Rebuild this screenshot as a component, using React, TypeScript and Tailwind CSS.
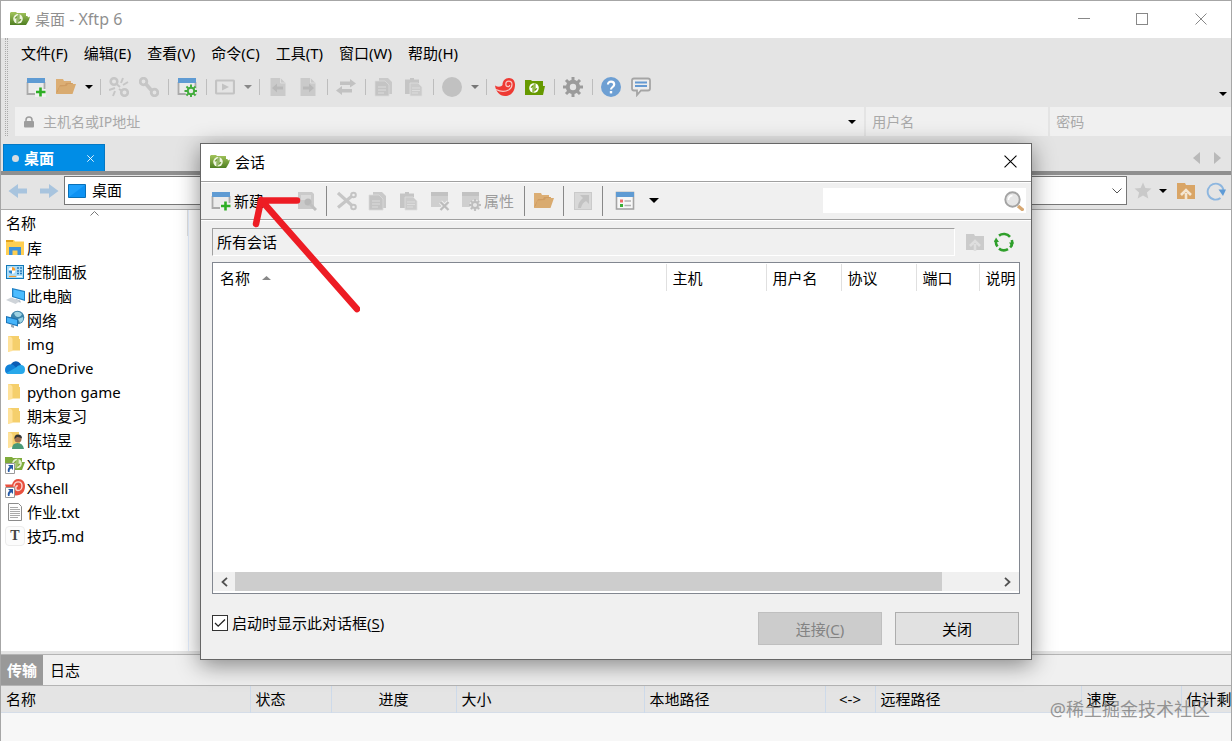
import React from "react";

type IconProps = { children: React.ReactNode; size?: string; box?: string };

function Icon({ children, size = "h-5 w-5", box = "0 0 20 20" }: IconProps) {
  return (
    <svg viewBox={box} className={`${size} block shrink-0`} fill="none" aria-hidden="true">
      {children}
    </svg>
  );
}

const Swirl = ({ x, y, disc, mark }: { x: number; y: number; disc: string; mark: string }) => (
  <g transform={`translate(${x} ${y})`}>
    <circle r="4.800" fill={disc} />
    <path d="M-.9 4.600V-2.400L-3-.4M.9-4.600V2.400L3 .4" stroke={mark} strokeWidth="1.200" />
  </g>
);

const XftpFolder = () => (
  <Icon>
    <defs>
      <linearGradient id="xftp-green" x1="0" y1="0" x2="0" y2="1">
        <stop offset="0" stopColor="#a3c55c" />
        <stop offset="1" stopColor="#4f7f22" />
      </linearGradient>
    </defs>
    <path d="M0 4 1 3h5l1 1h9v3h1.500l.5 1.500 2-1-1 3.500-2 3.500-1 1.500H0z" fill="url(#xftp-green)" />
    <Swirl x={8} y={9.800} disc="#eff5e0" mark="#6f9c35" />
  </Icon>
);

const XftpFlat = () => (
  <Icon>
    <path d="M0 3h6l1 1h11v5h2l-2 9H0z" fill="#669900" />
    <Swirl x={9} y={11} disc="#fff" mark="#669900" />
  </Icon>
);

const XshellFlat = () => (
  <Icon>
    <path d="M0 8.500c3 1.800 6.200 1.500 7.500-.5C7.500 4 10 1 14 1c3.500 0 6 2.800 6 6.500C20 14.500 16 19 10 19 4.500 19 1 14.500 0 8.500z" fill="#ee3a34" />
    <path d="M1 12.500c4.500 2.300 9.500 2.300 13 .200 2-1.300 3-3 3-5.200 0-2-1.300-3.400-3.200-3.400-1.800 0-3 1.300-3 3 0 1.600 1.100 2.600 2.300 2.600 1 0 1.600-.7 1.600-1.600" stroke="#f7c8c5" strokeWidth="1.200" />
  </Icon>
);

const WindowPlus = () => (
  <Icon>
    <path d="M1.500 5V17h17V5" stroke="#aaa" strokeWidth="1.800" fill="#ebebeb" />
    <path d="M1 1h18v5H1z" fill="#5f9bd3" />
    <path d="M9 12h11v8H9z" fill="#f0f0f0" />
    <path d="M14.500 10.500v9M10 15h9.500" stroke="#2eae25" strokeWidth="2.600" />
  </Icon>
);

const gearTeeth = "M10 0v4M10 16v4M0 10h4M16 10h4M3 3l3 3M14 14l3 3M17 3l-3 3M6 14l-3 3";

const WindowGear = () => (
  <Icon>
    <path d="M1.500 5V17h17V5" stroke="#aaa" strokeWidth="1.800" fill="#ebebeb" />
    <path d="M1 1h18v5H1z" fill="#5f9bd3" />
    <circle cx="14" cy="14" r="6" fill="#e8e8e8" />
    <g transform="translate(7.500 7.500) scale(.65)">
      <circle cx="10" cy="10" r="5" stroke="#42ac3c" strokeWidth="3" />
      <path d={gearTeeth} stroke="#42ac3c" strokeWidth="3" />
    </g>
  </Icon>
);

const Gear = () => (
  <Icon>
    <circle cx="10" cy="10" r="5.200" stroke="#9b9b9b" strokeWidth="4" />
    <path d={gearTeeth} stroke="#9b9b9b" strokeWidth="3" />
  </Icon>
);

const OpenFolder = () => (
  <Icon>
    <path d="M0 2h7l1 2h7v2h2v3L14 17H0z" fill="#dcae74" />
    <path d="M0 16 4 8h5l1-2h7" fill="#cf9c62" />
    <path d="m3.500 9.500 7-.5 1.500-2h8l-3.500 10H1z" fill="#d9ab70" />
  </Icon>
);

const Unlink = () => (
  <Icon>
    <g stroke="#c6c6c6" strokeWidth="2.600">
      <circle cx="5" cy="4.500" r="3.300" />
      <circle cx="15.500" cy="15.500" r="3.300" />
      <path d="m12 6 2-5M14 8l5-3M6 14l-2 5M6 11l-6 2M7.500 7l3.500 3M10 12l3 2" strokeWidth="2" />
    </g>
  </Icon>
);

const Link = () => (
  <Icon>
    <g stroke="#c6c6c6" strokeWidth="2.800">
      <circle cx="4.500" cy="4.500" r="3.300" />
      <circle cx="15.500" cy="15.500" r="3.300" />
      <path d="m6 6 7 8" strokeWidth="3.600" />
    </g>
  </Icon>
);

const Play = () => (
  <Icon>
    <rect x="1" y="3.500" width="18" height="13" rx="1" stroke="#c3c3c3" strokeWidth="2.200" />
    <path d="m7 6.500 7 3.500-7 3.500z" fill="#c3c3c3" />
  </Icon>
);

const PageArrow = ({ left = false }: { left?: boolean }) => (
  <Icon>
    <path d="M2.500 1h10l5 5v13h-15z" fill="#cacaca" />
    <path d="M12.500 1v5h5" stroke="#dedede" />
    <path d={left ? "m4 11 5-4.500v3h6v3H9v3z" : "m16 11-5-4.500v3H5v3h6v3z"} fill="#b9b9b9" />
  </Icon>
);

const Transfer = () => (
  <Icon>
    <path d="M4 4.500h10V2l6 4.500-6 4V8H4zM16 12H6V9L0 13.500l6 4.500v-2.500h10z" fill="#c2c2c2" />
  </Icon>
);

const Copy = () => (
  <Icon>
    <path d="M5 1h9l4 4v12H5z" fill="#c9c9c9" />
    <path d="M1 4h10l4 4v11H1z" fill="#c4c4c4" stroke="#dadada" strokeWidth=".8" />
    <path d="M4 10h8M4 13h8M4 16h6" stroke="#dcdcdc" />
  </Icon>
);

const Paste = () => (
  <Icon>
    <path d="M1 2.500h5V1h4v1.500h5V17H1z" fill="#c5c5c5" />
    <path d="M6 6h8l4 4v9H6z" fill="#cbcbcb" stroke="#dedede" strokeWidth=".8" />
    <path d="M8 11h8M8 13.500h8M8 16h6" stroke="#dcdcdc" />
  </Icon>
);

const Help = () => (
  <Icon>
    <circle cx="10" cy="10" r="10" fill="#6d9fd3" />
    <path d="M7 7.500C7 3.500 13.200 3.700 13.200 7.500c0 2.500-3.200 2.500-3.200 5" stroke="#fff" strokeWidth="2.200" />
    <path d="M8.800 14h2.400v2.400H8.800z" fill="#fff" />
  </Icon>
);

const Chat = () => (
  <Icon>
    <path d="M3 1.500h14q2 0 2 2v8q0 2-2 2h-7L6 18v-4.500H3q-2 0-2-2v-8q0-2 2-2z" fill="#ededed" stroke="#a5a5a5" strokeWidth="1.800" />
    <path d="M4 5.500h12M4 9h12" stroke="#6499d2" strokeWidth="1.900" />
  </Icon>
);

const Disc = () => (
  <Icon>
    <circle cx="10" cy="10" r="10" fill="#c1c1c1" />
  </Icon>
);

const SaveSearch = () => (
  <Icon>
    <path d="M1 1h14l2 2v15H1z" fill="#cacaca" />
    <path d="M4 4h10v5H4z" fill="#dadada" />
    <circle cx="11" cy="11" r="3.500" fill="#b9b9b9" />
    <path d="m13 13 6 6" stroke="#c0c0c0" strokeWidth="3" />
  </Icon>
);

const Cut = () => (
  <Icon>
    <path d="m1 2 14 12.500M1 16.500 15 5" stroke="#c6c6c6" strokeWidth="3.200" />
    <circle cx="16.500" cy="4" r="2.300" fill="#efefef" stroke="#c4c4c4" strokeWidth="2" />
    <circle cx="16.500" cy="16" r="2.300" fill="#efefef" stroke="#c4c4c4" strokeWidth="2" />
  </Icon>
);

const WindowDelete = () => (
  <Icon>
    <path d="M1 1h17v15H1z" fill="#cfcfcf" />
    <path d="M1 1h17v4H1z" fill="#c2c2c2" />
    <path d="m10.500 11 8 8m0-8-8 8" stroke="#efefef" strokeWidth="4" />
    <path d="m10.500 11 8 8m0-8-8 8" stroke="#bcbcbc" strokeWidth="2.300" />
  </Icon>
);

const WindowProps = () => (
  <Icon>
    <path d="M1 1h17v15H1z" fill="#cfcfcf" />
    <path d="M1 1h17v4H1z" fill="#c2c2c2" />
    <circle cx="14" cy="14" r="5.500" fill="#e7e7e7" />
    <g transform="translate(8 8) scale(.6)" stroke="#bdbdbd" strokeWidth="3">
      <circle cx="10" cy="10" r="5" />
      <path d={gearTeeth} />
    </g>
  </Icon>
);

const Shortcut = () => (
  <Icon>
    <rect x="1.500" y="1.500" width="17" height="17" fill="#d8d8d8" stroke="#cacaca" />
    <path d="M7 4h9v9l-3-3q-4 2-5 7H5q0-6 5-10z" fill="#c2c2c2" />
  </Icon>
);

const ListView = () => (
  <Icon>
    <rect x="1.500" y="1.500" width="17" height="16.500" fill="#f7f7f7" stroke="#a4a4a4" strokeWidth="1.600" />
    <path d="M1 1h18v5H1z" fill="#5f9bd3" />
    <path d="M5 8.500h3v3H5z" fill="#ee6b6b" />
    <path d="M5 13h3v3H5z" fill="#3aae35" />
    <path d="M9.500 10H16M9.500 14.500H16" stroke="#b3b3b3" strokeWidth="1.400" />
  </Icon>
);

const Search = () => (
  <Icon>
    <path d="m14 15 5.500 4.500" stroke="#d7a873" strokeWidth="3.400" />
    <circle cx="8.500" cy="8.500" r="7.200" fill="#e6e6e6" stroke="#a3a3a3" strokeWidth="1.900" />
    <path d="M4.500 9q0-4 4-4.500" stroke="#fff" strokeWidth="1.500" />
  </Icon>
);

const FolderUp = ({ color, arrow }: { color: string; arrow: string }) => (
  <Icon>
    <path d="M1 2h8l1 2h9v14H1z" fill={color} />
    <path d="M10 19v-7M5 14l5-5 5 5" stroke={arrow} strokeWidth="2.600" />
  </Icon>
);

const Cycle = () => (
  <Icon>
    <path d="M3.500 14.500A8 8 0 0 1 2 8M5 3.600a8.200 8.200 0 0 1 11 1.200M17.800 8a8 8 0 0 1-1.600 7.500M14 17.200a8.200 8.200 0 0 1-9-.6" stroke="#2f9f2b" strokeWidth="2.600" />
    <path d="m0 10 2-4.500L5 10zM20 10.500l-2 4.500-3-4.500z" fill="#2f9f2b" />
  </Icon>
);

const Reload = () => (
  <Icon>
    <path d="M14.500 17A8 8 0 1 1 17.500 9" stroke="#8db6df" strokeWidth="1.900" />
    <path d="M12.500 8.500H20L17 15z" fill="#5f9bd6" />
  </Icon>
);

const NavArrow = ({ flip = false }: { flip?: boolean }) => (
  <Icon>
    <path d={flip ? "M1 7.500h9V3l9.500 7-9.500 7v-4.500H1z" : "M19 7.500h-9V3L.5 10l9.500 7v-4.500h9z"} fill="#a8c4de" />
  </Icon>
);

const Star = () => (
  <Icon>
    <path d="m10 1.500 2.400 5.600 6.100.5-4.600 4 1.400 6-5.300-3.200-5.300 3.200 1.400-6-4.600-4 6.100-.5z" fill="#c9c9c9" />
  </Icon>
);

const Caret = ({ fill = "#000", wide = false }: { fill?: string; wide?: boolean }) => (
  <Icon size={wide ? "h-[5px] w-[10px]" : "h-1 w-2"} box="0 0 8 4">
    <path d="M0 0h8L4 4z" fill={fill} />
  </Icon>
);

const DesktopIcon = () => (
  <Icon>
    <path d="M1.500 3.500h17v13h-17z" fill="#1ea0fb" stroke="#0870b8" />
    <path d="M2 16 18 4v12z" fill="#0d92f3" />
  </Icon>
);

const Library = () => (
  <Icon>
    <path d="M1 2h8l1 1.500h9V17H1z" fill="#ffcf52" />
    <path d="M1 2h7v2H1z" fill="#e2a21b" />
    <path d="M4 17V9h12v8h-3.500v-4.500h-5V17z" fill="#3d92dc" />
  </Icon>
);

const ControlPanel = () => (
  <Icon>
    <rect x="1.500" y="3.500" width="17" height="13" fill="#a9dcf8" stroke="#1379b8" />
    <circle cx="7" cy="8.500" r="3.300" fill="#fff" />
    <path d="M7 8.500V5a3.300 3.300 0 0 1 3.300 3.500z" fill="#f79b2c" />
    <path d="M3.700 8.500A3.300 3.300 0 0 0 7 11.800V8.500z" fill="#2883cf" />
    <path d="M12 6h2M15 6h2M12 9h2M15 9h2M12 11.500h2M15 11.500h2" stroke="#2b7ab8" strokeWidth="1.500" />
    <path d="M4 14.500h7" stroke="#f79b2c" strokeWidth="1.200" />
    <path d="M12 14.500h5" stroke="#fff" strokeWidth="1.200" />
  </Icon>
);

const Computer = () => (
  <Icon>
    <path d="m7 2 13 3v10L7 11z" fill="#1f80c4" />
    <path d="m8.300 3.600 10.700 2.300v7.700L8.300 10.300z" fill="#4cbcff" />
    <path d="m11 13 4 1.500 1 2-7-1z" fill="#a9b5c0" />
    <path d="m1 14 5-2.500L15 15l-4.500 3z" fill="#cfd4d9" />
  </Icon>
);

const Network = () => (
  <Icon>
    <circle cx="12.500" cy="7.500" r="6.800" fill="#3b83aa" />
    <path d="M9 3q4-3 8 1-1 3-4 3t-4-4zM13 9l5-2q1 4-3 6z" fill="#9fd3e3" />
    <path d="m1 6 12 3v7.500L1 13z" fill="#1a74b8" />
    <path d="m2 7.500 10 2.400v5L2 12.200z" fill="#45b4fa" />
    <path d="m6 14.500 3 1v2.500l-3-1z" fill="#9aa8b3" />
  </Icon>
);

const Folder = () => (
  <Icon>
    <path d="M3 2h11v3h1v11.500H6L3 18z" fill="#f5cf6c" />
    <path d="M3 2q4 .5 4.500 3v12L3 18z" fill="#ffe29a" />
  </Icon>
);

const OneDrive = () => (
  <Icon>
    <path d="M6 6q3-4 7.500-2 2 1 3 3.500L7 13z" fill="#0a5cb4" />
    <path d="M0 12q0-4.500 4-5.500 4-1 6 2l3 3-9 4.500Q0 16 0 12z" fill="#1182d8" />
    <path d="M11 9.500q2-3 5.500-2.500 3.500.8 3.500 4.500 0 4.500-4 4.500H4q-1.500 0-2.500-1z" fill="#28a8ea" />
  </Icon>
);

const UserFolder = () => (
  <Icon>
    <path d="M3 2h11v3h1v11.500H6L3 18z" fill="#f5cf6c" />
    <path d="M3 2q4 .5 4.500 3v12L3 18z" fill="#ffe29a" />
    <path d="M7 19q0-6 5.500-6T19 19z" fill="#4a9a78" />
    <circle cx="13" cy="9" r="3.500" fill="#a2714f" />
    <path d="M9.500 9q-.5-4.500 3.500-4.500 4 0 4 4-3-2-5-1.500z" fill="#343434" />
  </Icon>
);

const ShortcutBadge = () => (
  <>
    <path d="M.5 9.500h9v10h-9z" fill="#fff" stroke="#9a9a9a" />
    <path d="M3 11h5v5l-1.800-1.700q-2 1-1.700 3.700H3q-1-3.500 1.700-5.300z" fill="#2459a6" />
  </>
);

const XftpShortcut = () => (
  <Icon>
    <path d="M0 3h7l1 1h9v4l3 0-3 8H0z" fill="#7fac3c" />
    <Swirl x={12} y={9.500} disc="#e4efd0" mark="#7fac3c" />
    <ShortcutBadge />
  </Icon>
);

const XshellShortcut = () => (
  <Icon>
    <path d="M0 6.500h7C8 3 10 1 13.500 1c4 0 6.500 3 6.500 7 0 6-3.500 9.500-9 9.500C5 17.500 2 13 0 6.500z" fill="#e8503f" />
    <path d="M9 8.500c0-3 2-4.600 4.300-4.600 2.500 0 3.700 1.800 3.700 4 0 3-2 4.600-4 4.600-1.700 0-2.200-1.200-2.200-2.600 0-1.700 1-2.200 2-2.200" stroke="#fbd9d3" strokeWidth="1.400" />
    <ShortcutBadge />
  </Icon>
);

const TextFile = () => (
  <Icon>
    <path d="M3.500 1.500h10l3 3v14h-13z" fill="#fdfdfd" stroke="#8b8b8b" />
    <path d="M5 5.500h8M5 7.500h10M5 9.500h10M5 11.500h10M5 13.500h10M5 15.500h8" stroke="#a9a9a9" />
  </Icon>
);

const Typora = () => (
  <span className="flex h-5 w-5 shrink-0 items-center justify-center rounded border border-[#ececec] bg-[#fcfcfc] font-['Liberation_Serif',serif] text-[14px] leading-none font-bold text-[#444]">
    T
  </span>
);

const CloseX = ({ size, color, width = 1 }: { size: string; color: string; width?: number }) => (
  <Icon size={size} box="0 0 12 12">
    <path d="m.5.5 11 11m0-11-11 11" stroke={color} strokeWidth={width} />
  </Icon>
);

type ToolItem = { kind: "icon"; label: string; icon: React.ReactNode } | { kind: "caret"; label: string; fill?: string } | { kind: "sep" };

const icon = (label: string, node: React.ReactNode): ToolItem => ({ kind: "icon", label, icon: node });
const sep: ToolItem = { kind: "sep" };

const tools: ToolItem[] = [
  icon("新建", <WindowPlus />),
  icon("打开", <OpenFolder />),
  { kind: "caret", label: "打开选项" },
  sep,
  icon("断开", <Unlink />),
  icon("重新连接", <Link />),
  sep,
  icon("会话属性", <WindowGear />),
  sep,
  icon("运行", <Play />),
  { kind: "caret", label: "运行选项", fill: "#888" },
  sep,
  icon("向左传输", <PageArrow left />),
  icon("向右传输", <PageArrow />),
  sep,
  icon("同步", <Transfer />),
  sep,
  icon("复制", <Copy />),
  icon("粘贴", <Paste />),
  sep,
  icon("编码", <Disc />),
  { kind: "caret", label: "编码选项", fill: "#777" },
  sep,
  icon("Xshell", <XshellFlat />),
  icon("Xftp", <XftpFlat />),
  sep,
  icon("选项", <Gear />),
  sep,
  icon("帮助", <Help />),
  icon("反馈", <Chat />),
];

const menus = ["文件(F)", "编辑(E)", "查看(V)", "命令(C)", "工具(T)", "窗口(W)", "帮助(H)"];

const files: [string, React.ReactNode][] = [
  ["库", <Library />],
  ["控制面板", <ControlPanel />],
  ["此电脑", <Computer />],
  ["网络", <Network />],
  ["img", <Folder />],
  ["OneDrive", <OneDrive />],
  ["python game", <Folder />],
  ["期末复习", <Folder />],
  ["陈培昱", <UserFolder />],
  ["Xftp", <XftpShortcut />],
  ["Xshell", <XshellShortcut />],
  ["作业.txt", <TextFile />],
  ["技巧.md", <Typora />],
];

function TitleBar() {
  return (
    <header className="flex h-[37px] items-center bg-white pb-0.5 pl-[9px] text-[#8f8f8f]">
      <XftpFolder />
      <h1 className="ml-[5px] flex-1 text-[16px]">
        <span className="text-[15px]">桌面</span> - Xftp 6
      </h1>
      <button aria-label="最小化" className="flex h-full w-[58px] items-center justify-center">
        <span className="h-px w-3 bg-[#888]" />
      </button>
      <button aria-label="最大化" className="flex h-full w-[58px] items-center justify-center">
        <span className="h-3 w-3 border border-[#888]" />
      </button>
      <button aria-label="关闭窗口" className="flex h-full w-[60px] items-center justify-center">
        <CloseX size="h-3 w-3" color="#888" />
      </button>
    </header>
  );
}

function MainBars() {
  return (
    <div className="flex pb-2">
      <div className="ml-1 w-[3px] border-x border-dotted border-[#aaa]" />
      <div className="min-w-0 flex-1">
        <nav className="flex h-[30px] items-center gap-4 pl-[13px]">
          {menus.map((m) => (
            <button key={m}>{m}</button>
          ))}
        </nav>
        <div className="mt-0.5 flex h-[34px] items-center pl-[13px]">
          {tools.map((t, i) =>
            t.kind === "sep" ? (
              <span key={i} className="flex w-2 justify-center">
                <span className="h-4 w-px bg-[#bdbdbd]" />
              </span>
            ) : t.kind === "caret" ? (
              <button key={i} aria-label={t.label} className="flex w-[15px] justify-center">
                <Caret fill={t.fill} />
              </button>
            ) : (
              <button key={i} aria-label={t.label} className="flex w-[30px] justify-center">
                {t.icon}
              </button>
            )
          )}
          <button aria-label="工具栏选项" className="mr-1 ml-auto self-end pb-2">
            <Caret />
          </button>
        </div>
        <div className="mt-[3px] grid grid-cols-[minmax(0,850fr)_minmax(0,182fr)_minmax(0,181fr)] gap-x-0.5 pl-[7px] text-[14px]">
          <div className="flex h-[29px] items-center bg-[#f0f0f0] pr-2 pl-2">
            <Icon size="h-3 w-3" box="0 0 12 12">
              <path d="M3 6V4a3 3 0 0 1 6 0v2" stroke="#9d9d9d" strokeWidth="1.500" />
              <rect x="1" y="5" width="10" height="6.500" rx="1" fill="#9d9d9d" />
            </Icon>
            <input aria-label="主机名或IP地址" placeholder="主机名或IP地址" className="ml-2 min-w-0 flex-1 outline-none placeholder:text-[#a9a9a9]" />
            <button aria-label="主机列表">
              <Caret />
            </button>
          </div>
          <input aria-label="用户名" placeholder="用户名" className="h-[29px] min-w-0 bg-[#f0f0f0] px-1.5 outline-none placeholder:text-[#a9a9a9]" />
          <input aria-label="密码" type="password" placeholder="密码" className="h-[29px] min-w-0 bg-[#f0f0f0] px-1.5 outline-none placeholder:text-[#a9a9a9]" />
        </div>
      </div>
    </div>
  );
}

function TabStrip() {
  return (
    <div className="flex items-end border-b-4 border-[#8f8f8f] pl-0.5">
      <div className="flex h-[27px] w-[102px] items-center border border-b-0 border-[#0478c4] bg-[#008de6] px-2 text-white">
        <span className="h-[7px] w-[7px] rounded-full bg-[#d6dde2]" />
        <button className="ml-[5px] font-bold">桌面</button>
        <button aria-label="关闭标签" className="ml-auto p-0.5">
          <CloseX size="h-[7px] w-[7px]" color="#fff" width={1.5} />
        </button>
      </div>
      <div className="ml-auto flex items-center gap-3.5 self-center pr-2.5">
        <button aria-label="上一个标签">
          <Icon size="h-3 w-[7px]" box="0 0 7 12">
            <path d="M7 0v12L0 6z" fill="#b9b9b9" />
          </Icon>
        </button>
        <button aria-label="下一个标签">
          <Icon size="h-3 w-[7px]" box="0 0 7 12">
            <path d="M0 0v12l7-6z" fill="#b9b9b9" />
          </Icon>
        </button>
      </div>
    </div>
  );
}

function PathBar() {
  return (
    <div className="flex h-[35px] items-start border-b border-[#aaa] pt-px pl-[7px]">
      <div className="flex h-[29px] items-center gap-[11px]">
        <button aria-label="后退">
          <NavArrow />
        </button>
        <button aria-label="前进">
          <NavArrow flip />
        </button>
      </div>
      <div className="ml-[5px] flex h-[29px] flex-1 items-center border border-[#777] bg-white pr-1 pl-0.5">
        <DesktopIcon />
        <select aria-label="当前路径" className="ml-[5px] h-full flex-1 appearance-none pb-0.5 outline-none">
          <option>桌面</option>
        </select>
        <Icon size="pointer-events-none h-[6px] w-[10px]" box="0 0 10 6">
          <path d="m.5.5 4.500 4.500L9.500.5" stroke="#555" />
        </Icon>
      </div>
      <div className="flex h-[29px] items-center pr-[5px] pl-1.5">
        <button aria-label="收藏">
          <Star />
        </button>
        <button aria-label="收藏列表" className="flex w-5 justify-center">
          <Caret />
        </button>
        <button aria-label="上级文件夹" className="ml-[3px]">
          <FolderUp color="#d9a566" arrow="#f4e6d2" />
        </button>
        <button aria-label="刷新" className="ml-2.5">
          <Reload />
        </button>
      </div>
    </div>
  );
}

function FileList() {
  return (
    <div className="flex flex-1 bg-white">
      <div className="w-[188px] border-r border-[#e5efff]">
        <table className="w-full">
          <thead>
            <tr>
              <th className="h-[26px] border-r border-[#e0e0e0] p-0 pl-[5px] text-left align-top font-normal">
                <span className="flex justify-center pt-px pr-1">
                  <Icon size="h-[5px] w-[9px]" box="0 0 9 5">
                    <path d="m.5 4.500 4-4 4 4" stroke="#777" />
                  </Icon>
                </span>
                <span className="block leading-[14px]">名称</span>
              </th>
            </tr>
          </thead>
          <tbody>
            {files.map(([name, node]) => (
              <tr key={name}>
                <td className="h-6 p-0 pl-1">
                  <span className="flex items-center gap-0.5 whitespace-nowrap">
                    {node}
                    {name}
                  </span>
                </td>
              </tr>
            ))}
          </tbody>
        </table>
      </div>
    </div>
  );
}

const transferColumns: [string, string][] = [
  ["名称", "w-[249px] pl-[5px] text-left"],
  ["状态", "w-[81px] pl-[5px] text-left"],
  ["进度", "w-[125px] text-center"],
  ["大小", "w-[188px] pl-[5px] text-left"],
  ["本地路径", "w-[181px] pl-[5px] text-left"],
  ["<->", "w-[50px] text-center"],
  ["远程路径", "pl-[5px] text-left"],
  ["速度", "w-[100px] pl-[5px] text-left"],
  ["估计剩", "w-[50px] pl-[5px] text-left border-r-0"],
];

function TransferPanel() {
  return (
    <section className="relative h-[90px] bg-[#f7f7f7]">
      <div className="h-[3px] bg-[#e4e4e4]" />
      <div className="flex h-8 border-y border-[#b4b4b4] bg-[#f0f0f0]">
        <button className="w-[42px] bg-[#999] font-bold text-white">传输</button>
        <button className="w-11">日志</button>
      </div>
      <table className="w-full table-fixed border-b border-[#d5dde8] bg-[#e4e4e4]">
        <thead>
          <tr>
            {transferColumns.map(([name, cls]) => (
              <th key={name} className={`h-[26px] overflow-hidden border-r border-[#cddaea] p-0 font-normal whitespace-nowrap ${cls}`}>
                {name}
              </th>
            ))}
          </tr>
        </thead>
      </table>
      <p className="absolute top-[44px] right-[21px] text-[18px] leading-7 text-[#777]/75">@稀土掘金技术社区</p>
    </section>
  );
}

function DialogSep() {
  return (
    <span className="flex w-[9px] justify-center">
      <span className="h-[30px] w-px bg-[#888]" />
    </span>
  );
}

const sessionColumns: [string, string][] = [
  ["主机", "w-[100px]"],
  ["用户名", "w-[75px]"],
  ["协议", "w-[75px]"],
  ["端口", "w-[63px]"],
  ["说明", "w-[40px]"],
];

function SessionDialog() {
  return (
    <div
      role="dialog"
      aria-label="会话"
      className="absolute top-[142px] left-1/2 w-[832px] -translate-x-1/2 border border-[#666] bg-[#f0f0f0] shadow-[0_5px_22px_rgba(0,0,0,0.45)]"
    >
      <div className="flex h-[37px] items-center bg-white pr-3.5 pb-0.5 pl-[9px]">
        <XftpFolder />
        <h2 className="ml-[5px] flex-1">会话</h2>
        <button aria-label="关闭对话框">
          <CloseX size="h-[13px] w-[13px]" color="#000" />
        </button>
      </div>
      <div className="flex h-[39px] items-center border-y border-t-[#a0a0a0] border-b-[#a0a0a0] pl-2.5 shadow-[inset_0_1px_0_#fff,0_1px_0_#fff]">
        <button className="flex w-[66px] items-center gap-[3px] whitespace-nowrap">
          <WindowPlus />
          新建
        </button>
        <button aria-label="新建选项" className="flex w-[15px] justify-center">
          <Caret />
        </button>
        <button aria-label="查找会话" className="flex w-[30px] justify-center">
          <SaveSearch />
        </button>
        <DialogSep />
        <button aria-label="剪切会话" className="flex w-[31px] justify-center">
          <Cut />
        </button>
        <button aria-label="复制会话" className="flex w-[31px] justify-center">
          <Copy />
        </button>
        <button aria-label="粘贴会话" className="flex w-[31px] justify-center">
          <Paste />
        </button>
        <button aria-label="删除会话" className="flex w-[31px] justify-center">
          <WindowDelete />
        </button>
        <button className="flex w-[65px] items-center gap-[3px] pl-1.5 whitespace-nowrap text-[#9c9c9c]">
          <WindowProps />
          属性
        </button>
        <DialogSep />
        <button aria-label="打开文件夹" className="flex w-[30px] justify-center">
          <OpenFolder />
        </button>
        <DialogSep />
        <button aria-label="创建快捷方式" className="flex w-[30px] justify-center">
          <Shortcut />
        </button>
        <DialogSep />
        <button aria-label="查看方式" className="flex w-9 justify-center">
          <ListView />
        </button>
        <button aria-label="查看选项" className="flex w-[22px] justify-center">
          <Caret wide />
        </button>
        <div className="mr-[5px] ml-auto flex h-[25px] w-[203px] items-center bg-white pr-0.5">
          <input aria-label="搜索会话" className="min-w-0 flex-1 px-1 outline-none" />
          <button aria-label="搜索">
            <Search />
          </button>
        </div>
      </div>
      <div className="px-[11px] pt-2 pb-3.5">
        <div className="flex items-center">
          <div className="h-7 flex-1 border border-t-[#a0a0a0] border-r-white border-b-white border-l-[#a0a0a0] pl-1 leading-[26px]">所有会话</div>
          <button aria-label="上级会话文件夹" className="ml-2.5">
            <FolderUp color="#cbcbcb" arrow="#dedede" />
          </button>
          <button aria-label="刷新会话" className="mr-1.5 ml-[9px]">
            <Cycle />
          </button>
        </div>
        <div className="mt-1.5 flex h-[332px] flex-col border border-[#828790] bg-white">
          <table className="mt-px w-full table-fixed">
            <thead>
              <tr>
                <th className="h-[27px] border-r border-[#e0e0e0] p-0 pl-[7px] text-left font-normal">
                  <span className="flex items-center gap-3">
                    名称
                    <Icon size="h-1 w-[9px]" box="0 0 9 4">
                      <path d="M0 4h9L4.500 0z" fill="#888" />
                    </Icon>
                  </span>
                </th>
                {sessionColumns.map(([name, cls]) => (
                  <th key={name} className={`border-r border-[#e0e0e0] p-0 pl-1.5 text-left font-normal whitespace-nowrap last:border-r-0 ${cls}`}>
                    {name}
                  </th>
                ))}
              </tr>
            </thead>
          </table>
          <div className="mt-auto mb-0.5 flex h-[19px] bg-[#f0f0f0]">
            <button aria-label="向左滚动" className="flex w-[22px] items-center justify-center">
              <Icon size="h-[10px] w-[7px]" box="0 0 7 10">
                <path d="M6 .8 1.500 5 6 9.200" stroke="#505050" strokeWidth="1.800" />
              </Icon>
            </button>
            <span className="flex-1">
              <span className="block h-full w-[93%] bg-[#cdcdcd]" />
            </span>
            <button aria-label="向右滚动" className="flex w-6 items-center justify-center">
              <Icon size="h-[10px] w-[7px]" box="0 0 7 10">
                <path d="M1 .8 5.500 5 1 9.200" stroke="#505050" strokeWidth="1.800" />
              </Icon>
            </button>
          </div>
        </div>
        <div className="mt-[18px] flex items-start pr-px">
          <label className="flex flex-1 items-center gap-1 pt-px">
            <span className="grid h-4 w-4 place-items-center">
              <input type="checkbox" defaultChecked className="peer col-start-1 row-start-1 h-4 w-4 appearance-none border border-[#333] bg-white" />
              <span className="pointer-events-none invisible col-start-1 row-start-1 peer-checked:visible">
                <Icon size="h-3 w-3" box="0 0 12 12">
                  <path d="m1 6 3.200 3.200L11 2.500" stroke="#222" strokeWidth="1.300" />
                </Icon>
              </span>
            </span>
            <span>
              启动时显示此对话框(<u className="underline-offset-2">S</u>)
            </span>
          </label>
          <button disabled className="h-[33px] w-[124px] border border-[#bfbfbf] bg-[#ccc] text-[#838383]">
            连接(<u className="underline-offset-2">C</u>)
          </button>
          <button className="ml-[13px] h-[33px] w-[124px] border border-[#adadad] bg-[#e1e1e1]">关闭</button>
        </div>
      </div>
      <svg viewBox="0 0 110 120" className="pointer-events-none absolute top-[52px] left-[49px] h-[120px] w-[110px]" fill="none" aria-hidden="true">
        <path d="M107 113 11 4M47 4.500H11L6 28" stroke="#ed1c24" strokeWidth="6.500" strokeLinecap="round" strokeLinejoin="round" />
      </svg>
    </div>
  );
}

export default function App() {
  return (
    <main className="relative flex min-h-screen flex-col overflow-hidden border border-b-0 border-[#a6a6a6] bg-[#e4e4e4] font-['Noto_Sans','Noto_Sans_CJK_SC',sans-serif] text-[15px] leading-5 text-black">
      <TitleBar />
      <MainBars />
      <TabStrip />
      <PathBar />
      <FileList />
      <TransferPanel />
      <SessionDialog />
    </main>
  );
}
